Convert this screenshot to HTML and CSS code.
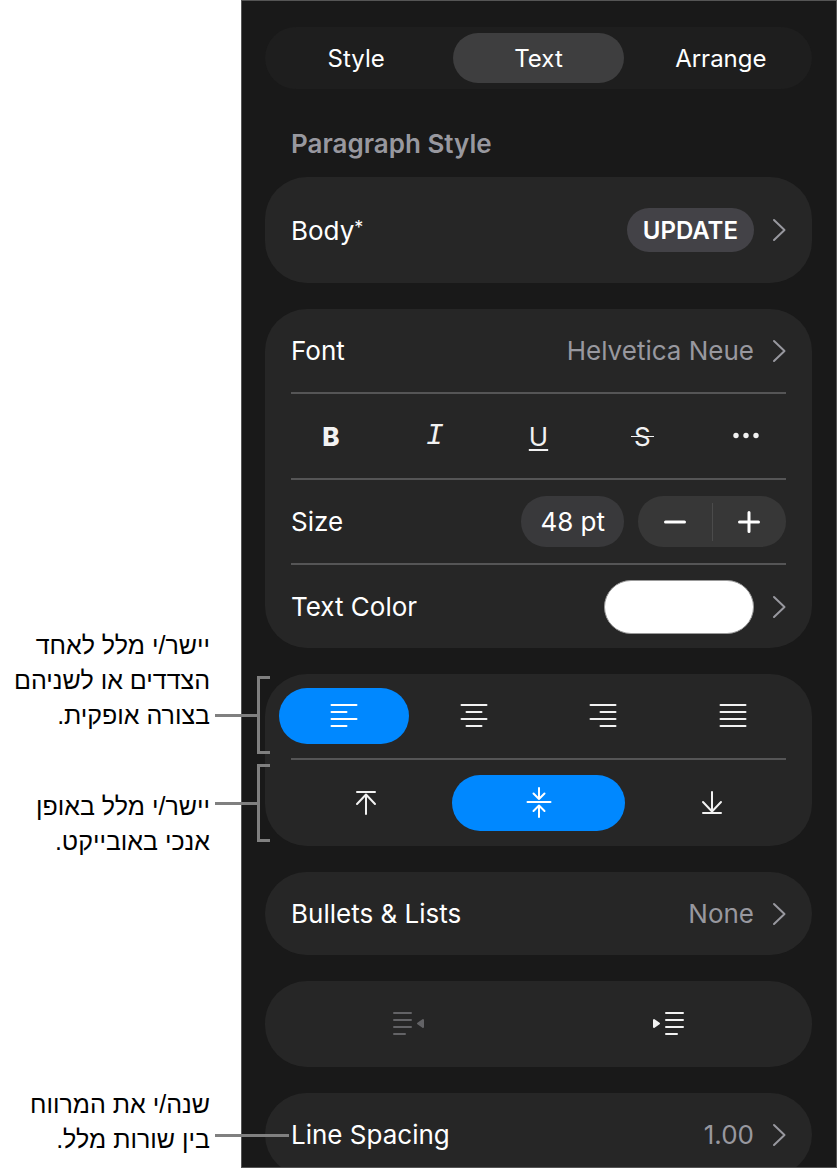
FILE: index.html
```html
<!DOCTYPE html>
<html lang="he">
<head>
    <meta charset="UTF-8">
    <meta name="viewport" content="width=device-width, initial-scale=1.0">
    <title>Text Format</title>
    <link rel="stylesheet" href="styles.css">
</head>
<body>
    <div class="page">
        <aside class="callouts">
            <p class="callout" dir="rtl">יישר/י מלל לאחד הצדדים או לשניהם בצורה אופקית.<span class="leader leader-bracket leader-horizontal"></span></p>
            <p class="callout" dir="rtl">יישר/י מלל באופן אנכי באובייקט.<span class="leader leader-bracket leader-vertical"></span></p>
            <p class="callout" dir="rtl">שנה/י את המרווח בין שורות מלל.<span class="leader leader-line"></span></p>
        </aside>

        <main class="panel" lang="en">
            <nav class="tabs">
                <button class="tab">Style</button>
                <button class="tab active">Text</button>
                <button class="tab">Arrange</button>
            </nav>

            <h2>Paragraph Style</h2>
            <section class="card">
                <div class="row row-tall">
                    <span class="label">Body<span class="modified">*</span></span>
                    <button class="update-button">UPDATE</button>
                    <svg class="chevron" viewBox="0 0 14 24"><path d="M2 2l10.500 10L2 22"/></svg>
                </div>
            </section>

            <section class="card">
                <div class="row">
                    <span class="label">Font</span>
                    <span class="value">Helvetica Neue</span>
                    <svg class="chevron" viewBox="0 0 14 24"><path d="M2 2l10.500 10L2 22"/></svg>
                </div>
                <hr>
                <div class="options five">
                    <button class="option bold" aria-label="Bold">B</button>
                    <button class="option italic" aria-label="Italic">I</button>
                    <button class="option underline" aria-label="Underline">U</button>
                    <button class="option" aria-label="Strikethrough"><span class="strike">S</span></button>
                    <button class="option" aria-label="More">
                        <svg class="icon dots" viewBox="0 0 32 32"><circle cx="6" cy="15.500" r="2.700"/><circle cx="16" cy="15.500" r="2.700"/><circle cx="26" cy="15.500" r="2.700"/></svg>
                    </button>
                </div>
                <hr>
                <div class="row">
                    <span class="label">Size</span>
                    <button class="size-button">48 pt</button>
                    <div class="stepper">
                        <button aria-label="Decrease size">
                            <svg class="icon thick" viewBox="0 0 32 32"><path d="M6.500 16h19"/></svg>
                        </button>
                        <button aria-label="Increase size">
                            <svg class="icon thick" viewBox="0 0 32 32"><path d="M6.500 16h19M16 6.500v19"/></svg>
                        </button>
                    </div>
                </div>
                <hr>
                <div class="row">
                    <span class="label">Text Color</span>
                    <button class="swatch" aria-label="Text Color"></button>
                    <svg class="chevron" viewBox="0 0 14 24"><path d="M2 2l10.500 10L2 22"/></svg>
                </div>
            </section>

            <section class="card">
                <div class="options four">
                    <button class="option selected" aria-label="Align left">
                        <svg class="icon" viewBox="0 0 32 32"><path d="M3.500 5h25M3.500 12h15M3.500 19h25M3.500 26h15"/></svg>
                    </button>
                    <button class="option" aria-label="Align center">
                        <svg class="icon" viewBox="0 0 32 32"><path d="M3.500 5h25M8.500 12h15M3.500 19h25M8.500 26h15"/></svg>
                    </button>
                    <button class="option" aria-label="Align right">
                        <svg class="icon" viewBox="0 0 32 32"><path d="M3.500 5h25M13.500 12h15M3.500 19h25M13.500 26h15"/></svg>
                    </button>
                    <button class="option" aria-label="Justify">
                        <svg class="icon" viewBox="0 0 32 32"><path d="M3.500 5h25M3.500 12h25M3.500 19h25M3.500 26h25"/></svg>
                    </button>
                </div>
                <hr>
                <div class="options three">
                    <button class="option" aria-label="Align top">
                        <svg class="icon" viewBox="0 0 32 32"><path d="M7 5h18M16 27V8M7 17l9-9.500L25 17"/></svg>
                    </button>
                    <button class="option selected" aria-label="Align middle">
                        <svg class="icon" viewBox="0 0 32 32"><path d="M4.500 15h23M16 1v11M10.500 6.500L16 12l5.500-5.500M16 30V18.500M10.500 24l5.500-5.500 5.500 5.500"/></svg>
                    </button>
                    <button class="option" aria-label="Align bottom">
                        <svg class="icon" viewBox="0 0 32 32"><path d="M7 26h18M16 5v19M7 15l9 9.500L25 15"/></svg>
                    </button>
                </div>
            </section>

            <section class="card">
                <div class="row">
                    <span class="label">Bullets &amp; Lists</span>
                    <span class="value">None</span>
                    <svg class="chevron" viewBox="0 0 14 24"><path d="M2 2l10.500 10L2 22"/></svg>
                </div>
            </section>

            <section class="card">
                <div class="options two">
                    <button class="option" disabled aria-label="Outdent">
                        <svg class="icon" viewBox="0 0 32 32"><path d="M1 5h17M1 12h17M1 19h17M1 26h11"/><path class="solid" d="M30 12v7l-5-3.500z"/></svg>
                    </button>
                    <button class="option" aria-label="Indent">
                        <svg class="icon" viewBox="0 0 32 32"><path d="M14 5h17M14 12h17M14 19h17M14 26h11"/><path class="solid" d="M2 12v7l5-3.500z"/></svg>
                    </button>
                </div>
            </section>

            <section class="card">
                <div class="row">
                    <span class="label">Line Spacing</span>
                    <span class="value">1.00</span>
                    <svg class="chevron" viewBox="0 0 14 24"><path d="M2 2l10.500 10L2 22"/></svg>
                </div>
            </section>
        </main>
    </div>
</body>
</html>
```
FILE: styles.css
```css
*,
*::before,
*::after {
    box-sizing: border-box;
}
body {
    margin: 0;
    background-color: white;
    font-family: "Inter", sans-serif;
    font-size: 26px;
}
button {
    padding: 0;
    border: none;
    background: none;
    color: inherit;
    font: inherit;
    cursor: pointer;
}
.page {
    display: flex;
    height: 100vh;
    padding: 0 1px 2px 0;
    overflow: hidden;
}

/* callouts */
.callouts {
    flex: none;
    width: 241px;
    padding: 628px 31px 0 8px;
}
.callout {
    position: relative;
    margin: 0 0 56px;
    font-family: "Liberation Sans", sans-serif;
    font-size: 25px;
    line-height: 35px;
    color: black;
}
.callout + .callout {
    margin-bottom: 228px;
}
.leader {
    position: absolute;
    left: 100%;
    margin-left: 5px;
}
.leader::before {
    content: "";
    position: absolute;
    left: 0;
    width: 42px;
    height: 3px;
    background-color: #808080;
}
.leader-bracket::after {
    content: "";
    position: absolute;
    left: 42px;
    top: -38px;
    width: 13px;
    height: 78px;
    border: 3px solid #808080;
    border-right: none;
}
.leader-horizontal {
    top: 86px;
}
.leader-vertical {
    top: 13px;
}
.leader-line {
    top: 47px;
}
.leader-line::before {
    width: 74px;
}

/* format panel */
.panel {
    flex: 1;
    padding: 26px 24px 0 23px;
    border: 1px solid #555;
    background-color: #191919;
    color: white;
    overflow: hidden;
}
.tabs {
    display: grid;
    grid-template-columns: repeat(3, 1fr);
    gap: 12px;
    padding: 6px;
    border-radius: 32px;
    background-color: #1e1e1e;
}
.tab {
    height: 50px;
    border-radius: 25px;
    font-size: 24px;
}
.tab.active {
    background-color: #3e3e3f;
}
h2 {
    margin: 39px 26px 17px;
    font-size: 26px;
    line-height: 32px;
    font-weight: 600;
    color: #98989f;
}
.card {
    margin-bottom: 26px;
    border-radius: 42px;
    background-color: #262626;
}
.card hr {
    height: 2px;
    margin: 0 26px;
    border: none;
    background-color: #555556;
}
.row {
    display: flex;
    align-items: center;
    height: 83px;
    padding: 0 26px;
}
.row-tall {
    height: 106px;
}
.label {
    flex: 1;
}
.modified {
    font-size: 18px;
    vertical-align: 6px;
    line-height: 1;
}
.value {
    color: #98989f;
}
.chevron {
    width: 14px;
    height: 24px;
    margin-left: 18px;
    fill: none;
    stroke: #98989f;
    stroke-width: 2;
    stroke-linecap: round;
    stroke-linejoin: round;
}
.update-button {
    height: 44px;
    padding: 0 16px;
    border-radius: 22px;
    background-color: #434247;
    font-size: 24px;
    font-weight: 600;
}
.size-button {
    height: 51px;
    padding: 0 19px;
    border-radius: 25px;
    background-color: #39393b;
}
.stepper {
    display: flex;
    align-items: center;
    width: 148px;
    height: 51px;
    margin-left: 14px;
    border-radius: 25px;
    background-color: #373737;
}
.stepper button {
    flex: 1;
    display: flex;
    align-items: center;
    justify-content: center;
    height: 38px;
}
.stepper button + button {
    border-left: 1px solid #4b4b4b;
}
.swatch {
    width: 150px;
    height: 54px;
    border: 1px solid #999;
    border-radius: 27px;
    background-color: white;
}

/* icon buttons */
.options {
    display: grid;
    align-items: center;
    height: 84px;
    padding: 0 14px;
}
.two {
    grid-template-columns: repeat(2, 1fr);
}
.three {
    grid-template-columns: repeat(3, 1fr);
}
.four {
    grid-template-columns: repeat(4, 1fr);
}
.five {
    grid-template-columns: repeat(5, 1fr);
}
.two,
.three {
    height: 86px;
}
.option {
    display: flex;
    align-items: center;
    justify-content: center;
    height: 56px;
    border-radius: 28px;
    color: #f2f2f2;
}
.option.selected {
    background-color: #0088ff;
    color: white;
}
.option:disabled {
    color: #636366;
}
.icon {
    width: 32px;
    height: 32px;
    fill: none;
    stroke: currentColor;
    stroke-width: 2;
    stroke-linecap: round;
    stroke-linejoin: round;
}
.icon.thick {
    stroke-width: 3;
}
.icon.dots {
    fill: currentColor;
    stroke: none;
}
.solid {
    fill: currentColor;
}
.bold {
    font-weight: 800;
}
.italic {
    font-family: "Liberation Mono", monospace;
    font-size: 30px;
    font-style: italic;
}
.underline {
    text-decoration: underline;
    text-decoration-thickness: 2px;
    text-underline-offset: 3px;
}
.strike {
    position: relative;
}
.strike::after {
    content: "";
    position: absolute;
    left: -3px;
    right: -3px;
    top: 50%;
    height: 1px;
    background-color: currentColor;
}
```
